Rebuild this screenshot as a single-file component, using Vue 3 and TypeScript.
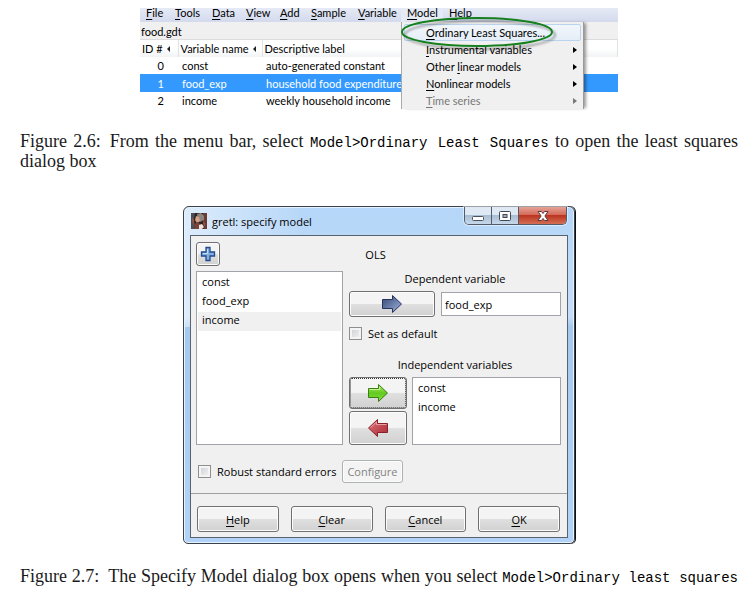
<script setup lang="ts">
import { ref } from 'vue'

interface Mnemonic {
  before?: string
  key: string
  after: string
}
interface MenuEntry extends Mnemonic {
  submenu?: boolean
  active?: boolean
  faded?: boolean
}

const menus: Mnemonic[] = [
  { key: 'F', after: 'ile' },
  { key: 'T', after: 'ools' },
  { key: 'D', after: 'ata' },
  { key: 'V', after: 'iew' },
  { key: 'A', after: 'dd' },
  { key: 'S', after: 'ample' },
  { key: 'V', after: 'ariable' },
  { key: 'M', after: 'odel' },
  { key: 'H', after: 'elp' },
]

const modelMenu: MenuEntry[] = [
  { key: 'O', after: 'rdinary Least Squares...', active: true },
  { key: 'I', after: 'nstrumental variables', submenu: true },
  { before: 'Other ', key: 'l', after: 'inear models', submenu: true },
  { key: 'N', after: 'onlinear models', submenu: true },
  { key: 'T', after: 'ime series', submenu: true, faded: true },
]

const series = [
  { id: 0, name: 'const', label: 'auto-generated constant' },
  { id: 1, name: 'food_exp', label: 'household food expenditure p' },
  { id: 2, name: 'income', label: 'weekly household income' },
]
const selectedId = ref(1)

const available = ['const', 'food_exp', 'income']
const highlighted = ref('income')
const dependent = ref('food_exp')
const regressors = ref(['const', 'income'])
const setDefault = ref(false)
const robust = ref(false)

const actions: Mnemonic[] = [
  { key: 'H', after: 'elp' },
  { key: 'C', after: 'lear' },
  { key: 'C', after: 'ancel' },
  { key: 'O', after: 'K' },
]
</script>

<template>
  <main class="page">
    <figure class="figure">
      <div class="main-window">
        <nav class="menubar">
          <button
            v-for="(m, i) in menus"
            :key="i"
            type="button"
            class="menu-title"
            :class="{ open: m.key === 'M' }"
          ><u>{{ m.key }}</u>{{ m.after }}</button>
        </nav>
        <div class="filename">food.gdt</div>
        <table class="series">
          <thead>
            <tr>
              <th class="col-id">ID # <i class="sort"></i></th>
              <th class="col-name">Variable name <i class="sort"></i></th>
              <th>Descriptive label</th>
            </tr>
          </thead>
          <tbody>
            <tr
              v-for="s in series"
              :key="s.id"
              :class="{ selected: s.id === selectedId }"
              @click="selectedId = s.id"
            >
              <td class="id">{{ s.id }}</td>
              <td>{{ s.name }}</td>
              <td>{{ s.label }}</td>
            </tr>
          </tbody>
        </table>
        <div class="popup">
          <button
            v-for="(e, i) in modelMenu"
            :key="i"
            type="button"
            class="entry"
            :class="{ active: e.active, faded: e.faded }"
          >
            <span>{{ e.before }}<u>{{ e.key }}</u>{{ e.after }}</span>
            <i v-if="e.submenu" class="chevron"></i>
          </button>
        </div>
        <svg class="ring" viewBox="0 0 162 40" aria-hidden="true">
          <ellipse cx="80" cy="20" rx="75" ry="14" />
        </svg>
      </div>
      <figcaption>
        Figure 2.6:&ensp;From the menu bar, select <code>Model&gt;Ordinary Least Squares</code> to open the least squares dialog box
      </figcaption>
    </figure>

    <figure class="figure second">
      <section class="dialog">
        <header class="titlebar">
          <svg class="app-icon" viewBox="0 0 16 16" aria-hidden="true">
            <rect width="16" height="16" fill="#2b2325" />
            <path d="M0 0h4L3 5l1 11H0z" fill="#4c5055" />
            <path d="M12 0h4v16h-3l-1-7z" fill="#6b3a30" />
            <path d="M6 1l4-1 3 3v4L9 9 7 7z" fill="#8d8480" />
            <path d="M5 3l3 1 1 4-3 2-2-3z" fill="#d9a284" />
            <path d="M3 11l4-2 4 4v3H4z" fill="#7a4337" />
            <path d="M8 12l3-1 2 3-2 2H8z" fill="#eee3dc" />
            <path d="M1 4l2 4-1 5z" fill="#b25a3e" />
            <path d="M12 8l2 3-1 2z" fill="#c0694c" />
          </svg>
          <h1>gretl: specify model</h1>
          <div class="caption-buttons">
            <button type="button" aria-label="Minimize">
              <svg viewBox="0 0 14 12"><rect x="1.500" y="6.500" width="11" height="4" rx="1" fill="#fff" stroke="#4a5260" /></svg>
            </button>
            <button type="button" aria-label="Maximize">
              <svg viewBox="0 0 14 12">
                <rect x="1.500" y="1.500" width="11" height="9" rx="1" fill="#fff" stroke="#404856" />
                <rect x="5" y="4.500" width="4" height="3" fill="#9fb0c5" stroke="#404856" />
              </svg>
            </button>
            <button type="button" class="close" aria-label="Close">
              <svg viewBox="0 0 14 12">
                <path d="M2 1.500h3.500L7 3.500l1.500-2H12L8.900 6l3.100 4.500H8.500L7 8.500l-1.500 2H2L5.100 6z" fill="#fff" stroke="#5c3a41" />
              </svg>
            </button>
          </div>
        </header>

        <form class="client" @submit.prevent>
          <div class="heading">
            <button type="button" class="btn plus" aria-label="Add variable">
              <svg viewBox="0 0 16 16">
                <path d="M6 1.500h4V6h4.500v4H10v4.500H6V10H1.500V6H6z" fill="#83aee2" stroke="#214a8c" stroke-width="1.300" />
                <path d="M7.500 3v4.500H3" fill="none" stroke="#c5dcf6" />
              </svg>
            </button>
            <span class="estimator">OLS</span>
          </div>

          <div class="columns">
            <select class="list" multiple size="3" aria-label="Available variables">
              <option
                v-for="v in available"
                :key="v"
                :class="{ current: v === highlighted }"
              >{{ v }}</option>
            </select>

            <div class="spec">
              <label class="group-label dep-label" for="dependent">Dependent variable</label>
              <div class="dep-row">
                <button type="button" class="btn choose" aria-label="Set dependent variable">
                  <svg viewBox="0 0 22 20">
                    <defs>
                      <linearGradient id="navy" x1="0" y1="0" x2="1" y2="1">
                        <stop offset="0" stop-color="#35466f" />
                        <stop offset=".5" stop-color="#687ca9" />
                        <stop offset="1" stop-color="#a5b7dc" />
                      </linearGradient>
                    </defs>
                    <path d="M1.500 5.500h10v-4L20.500 10l-9 8.500v-4h-10z" fill="url(#navy)" stroke="#26345c" />
                  </svg>
                </button>
                <input id="dependent" v-model="dependent" class="entry-box" type="text" />
              </div>
              <label class="check default-check">
                <input v-model="setDefault" type="checkbox" />
                <span>Set as default</span>
              </label>
              <label class="group-label indep-label" for="regressors">Independent variables</label>
              <div class="indep-row">
                <div class="movers">
                  <button type="button" class="btn focused" aria-label="Add regressor">
                    <svg viewBox="0 0 22 20">
                      <defs>
                        <linearGradient id="green" x1="0" y1="0" x2="0" y2="1">
                          <stop offset="0" stop-color="#b5ee68" />
                          <stop offset=".5" stop-color="#62ca20" />
                          <stop offset="1" stop-color="#83df37" />
                        </linearGradient>
                      </defs>
                      <path d="M1.500 5.500h10v-4L20.500 10l-9 8.500v-4h-10z" fill="url(#green)" stroke="#397f14" />
                      <path d="M2.500 6.500h10v-2.500" fill="none" stroke="#c9f294" />
                    </svg>
                  </button>
                  <button type="button" class="btn" aria-label="Remove regressor">
                    <svg viewBox="0 0 22 20">
                      <defs>
                        <linearGradient id="red" x1="0" y1="0" x2="1" y2="1">
                          <stop offset="0" stop-color="#df7d82" />
                          <stop offset=".6" stop-color="#bd454e" />
                          <stop offset="1" stop-color="#a83039" />
                        </linearGradient>
                      </defs>
                      <path d="M20.500 5.500h-10v-4L1.500 10l9 8.500v-4h10z" fill="url(#red)" stroke="#8a2029" />
                      <path d="M19.500 6.500h-10V4L3.500 9.500" fill="none" stroke="#e7a0a2" />
                    </svg>
                  </button>
                </div>
                <select id="regressors" class="list" multiple size="2">
                  <option v-for="v in regressors" :key="v">{{ v }}</option>
                </select>
              </div>
            </div>
          </div>

          <div class="robust-row">
            <label class="check">
              <input v-model="robust" type="checkbox" />
              <span>Robust standard errors</span>
            </label>
            <button type="button" class="btn configure" disabled>Configure</button>
          </div>

          <footer class="actions">
            <button v-for="(a, i) in actions" :key="i" type="button" class="btn">
              <span><u>{{ a.key }}</u>{{ a.after }}</span>
            </button>
          </footer>
        </form>
      </section>
      <figcaption>
        Figure 2.7:&ensp;The Specify Model dialog box opens when you select <code>Model&gt;Ordinary least squares</code>
      </figcaption>
    </figure>
  </main>
</template>

<style>
body {
  background: #fff;
}
</style>

<style scoped>
* {
  box-sizing: border-box;
}
.page {
  padding: 8px 18px 8px 20px;
  color: #000;
}
.figure {
  margin: 0;
}
.second {
  margin-top: 35px;
}
figcaption {
  margin-top: 22px;
  font: 18px/20px "Liberation Serif", serif;
  color: #1a1a1a;
  text-align: justify;
}
.second figcaption {
  text-align-last: justify;
}
code {
  font: 14px/14px "Liberation Mono", monospace;
  color: #000;
}
button,
input,
select {
  margin: 0;
  font: inherit;
  color: inherit;
}
button {
  padding: 0;
  border: 0;
  background: none;
}
u {
  text-underline-offset: 2px;
}

/* Main window excerpt */
.main-window {
  position: relative;
  width: 478px;
  margin: 0 auto;
  font: 11px/17px Lato, sans-serif;
  background: #fff;
}
.menubar {
  display: grid;
  grid-template-columns: 29px 37px 34px 34px 31px 47px 49px 42px 36px;
  height: 14px;
  overflow: hidden;
  background: linear-gradient(#e6eaf6, #d3daed);
}
.menu-title {
  height: 14px;
  padding: 0 0 4px 6px;
  line-height: 10px;
  text-align: left;
  white-space: nowrap;
}
.menu-title.open {
  background: #e6eaf4;
}
.filename {
  height: 18px;
  padding: 1px 1px 0;
  background: #f0f0f0;
  border-bottom: 1px solid #ddd;
}
.series {
  width: 100%;
  border-collapse: collapse;
  table-layout: fixed;
}
.series th {
  height: 17px;
  padding: 0 0 0 2px;
  font-weight: 400;
  text-align: left;
  white-space: nowrap;
  background: linear-gradient(#fff 50%, #f2f3f5);
  border-right: 1px solid #e2e2e2;
}
.series .col-id {
  width: 38px;
}
.series .col-name {
  width: 84px;
}
.series td {
  height: 17px;
  padding: 0 0 0 4px;
  white-space: nowrap;
  overflow: hidden;
}
.series td.id {
  padding: 0 14px 0 0;
  text-align: right;
}
.series .selected td {
  height: 18px;
  color: #fff;
  background: #3399ff;
}
.sort {
  display: inline-block;
  margin-left: 2px;
  border: solid transparent;
  border-width: 3px 3px 3px 0;
  border-right-color: #222;
  vertical-align: 1px;
}
.popup {
  position: absolute;
  top: 14px;
  bottom: 0;
  left: 261px;
  width: 183px;
  padding: 2px 2px 0;
  overflow: hidden;
  background: #f0f0f0;
  border-left: 1px solid #aaa;
  border-right: 1px solid #999;
  box-shadow: 3px 0 3px -1px #0006;
}
.entry {
  display: flex;
  align-items: center;
  justify-content: space-between;
  width: 100%;
  height: 17px;
  padding: 0 4px 0 22px;
  white-space: nowrap;
}
.entry.active {
  border: 1px solid #b9d4ee;
  border-radius: 2px;
  padding-left: 21px;
  background: linear-gradient(#f2f6fb, #e5eef8);
}
.entry.faded {
  color: #777;
}
.chevron {
  border: 3px solid transparent;
  border-left: 4px solid currentColor;
  border-right: 0;
}
.ring {
  position: absolute;
  top: 4px;
  left: 257px;
  width: 162px;
  height: 40px;
  pointer-events: none;
  filter: drop-shadow(3px 3px 1px #0005);
}
.ring ellipse {
  fill: none;
  stroke: #16801f;
  stroke-width: 2;
}

/* Dialog */
.dialog {
  width: 392px;
  margin: 0 auto;
  padding: 0 6px 5px;
  font: 11px/19px "Open Sans", sans-serif;
  background:
    linear-gradient(100deg, #fff8 0, #fff0 30%) top / 100% 120px no-repeat,
    linear-gradient(#b5d6f8 0, #c4def9 110px, #a5c8ef 120px, #b2d3f7);
  border: 1px solid #3b4148;
  border-radius: 6px 6px 5px 5px;
  box-shadow: inset 0 0 0 1px #e5f2ff, 1px 0 0 #111;
}
.titlebar {
  display: flex;
  align-items: center;
  gap: 5px;
  height: 28px;
  padding-left: 1px;
}
.app-icon {
  width: 16px;
  height: 16px;
}
h1 {
  flex: 1;
  margin: 0;
  font: inherit;
}
.caption-buttons {
  display: flex;
  align-self: flex-start;
  height: 18px;
  margin-right: 1px;
  overflow: hidden;
  border: 1px solid #505c6d;
  border-top: 0;
  border-radius: 0 0 5px 5px;
  box-shadow: 0 0 0 1px #ffffff80;
}
.caption-buttons button {
  display: flex;
  align-items: center;
  justify-content: center;
  width: 27px;
  background: linear-gradient(#dfe9f4 45%, #a9bdd3 50%, #c7d8e9);
  border-right: 1px solid #505c6d;
}
.caption-buttons .close {
  width: 47px;
  border-right: 0;
  background: linear-gradient(#e5a397, #d46b59 45%, #bb3521 50%, #d36e52);
}
.caption-buttons svg {
  width: 14px;
  height: 12px;
}
.client {
  background: #f0f0f0;
  border: 1px solid #59636f;
  padding: 6px 6px 0 5px;
}
.heading {
  display: grid;
  grid-template-columns: 24px 1fr 30px;
  align-items: center;
  height: 24px;
}
.estimator {
  text-align: center;
}
.btn {
  display: flex;
  align-items: center;
  justify-content: center;
  background: linear-gradient(#f4f4f4 48%, #dfdfdf 52%, #d1d1d1);
  border: 1px solid #707070;
  border-radius: 3px;
  box-shadow: inset 0 0 0 1px #fcfcfc;
}
.btn svg {
  width: 22px;
  height: 20px;
}
.plus {
  width: 24px;
  height: 24px;
}
.plus svg {
  width: 16px;
  height: 16px;
}
.columns {
  display: grid;
  grid-template-columns: 147px 1fr;
  gap: 6px;
  margin-top: 5px;
}
.list {
  display: block;
  width: 100%;
  min-width: 0;
  height: 100%;
  padding: 2px 1px 1px;
  overflow: hidden;
  background: #fff;
  border: 1px solid #a0a3a8;
  border-radius: 0;
  outline: 0;
}
.list option {
  height: 19px;
  min-height: 19px;
  padding: 0 4px;
  line-height: 19px;
}
.list .current {
  background: #f0f0f0;
}
.spec {
  display: flex;
  flex-direction: column;
}
.group-label {
  text-align: center;
}
.dep-label {
  height: 20px;
  line-height: 15px;
}
.dep-row {
  display: grid;
  grid-template-columns: 86px 1fr;
  align-items: center;
  gap: 6px;
  height: 26px;
}
.choose {
  height: 26px;
}
.entry-box {
  width: 100%;
  min-width: 0;
  height: 24px;
  padding: 0 3px;
  background: #fff;
  border: 1px solid #a0a3a8;
  outline: 0;
}
.check {
  display: flex;
  align-items: center;
  gap: 6px;
}
.check input {
  appearance: none;
  width: 13px;
  height: 13px;
  background: linear-gradient(135deg, #c8ccd2, #f7f7f7);
  border: 1px solid #8e8f8f;
  box-shadow: inset 0 0 0 2px #f4f4f4;
}
.default-check {
  height: 33px;
}
.indep-label {
  height: 27px;
  line-height: 29px;
}
.indep-row {
  display: grid;
  grid-template-columns: 58px 1fr;
  gap: 5px;
  height: 68px;
}
.movers {
  display: grid;
  grid-template-rows: 32px 34px;
  gap: 2px;
}
.focused {
  outline: 1px dotted #333;
  outline-offset: -2px;
}
.robust-row {
  display: flex;
  align-items: center;
  gap: 6px;
  height: 23px;
  margin-top: 15px;
  padding-left: 2px;
}
.configure {
  height: 23px;
  padding: 0 4px;
  color: #838383;
  background: #f4f4f4;
  border-color: #adb2b5;
}
.actions {
  display: grid;
  grid-template-columns: repeat(4, 1fr);
  gap: 12px;
  margin: 10px -6px 0 -5px;
  padding: 12px 7px 5px 6px;
  border-top: 1px solid #a0a0a0;
}
.actions .btn {
  height: 26px;
}
</style>
